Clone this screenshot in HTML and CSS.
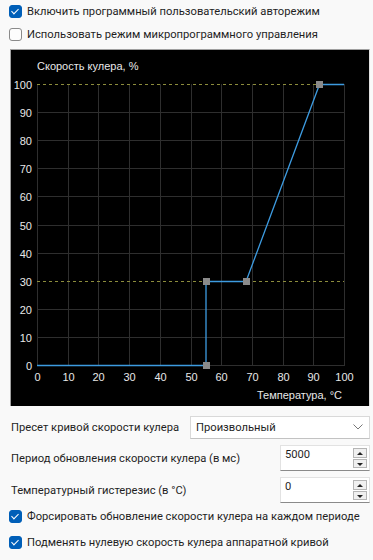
FILE: index.html
```html
<!DOCTYPE html>
<html lang="ru">
  <head>
    <meta charset="UTF-8" />
    <title>Кулер</title>
    <link rel="stylesheet" href="styles.css">
  </head>
  <body>
    <label class="check on"><span class="box"></span>Включить программный пользовательский авторежим</label>
    <label class="check tight"><span class="box"></span>Использовать режим микропрограммного управления</label>

    <div class="chart">
      <svg width="358" height="356" viewBox="0 0 358 356">
        <rect x="0" y="0" width="358" height="356" fill="#000" />
        <g id="grid" stroke="#2e2e2e" stroke-width="1"></g>
        <line x1="26" y1="34.5" x2="333" y2="34.5" stroke="#8c8c3c" stroke-dasharray="3 3" />
        <line x1="26" y1="231.5" x2="333" y2="231.5" stroke="#8c8c3c" stroke-dasharray="3 3" />
        <polyline points="26,315.5 195,315.5 195,231.5 235,231.5 308.5,34.5 333,34.5" fill="none" stroke="#3d9be0" stroke-width="1.3" />
        <g fill="#8a8a8a">
          <rect x="192" y="312" width="7" height="7" />
          <rect x="192" y="228" width="7" height="7" />
          <rect x="232" y="228" width="7" height="7" />
          <rect x="305" y="31" width="7" height="7" />
        </g>
        <g id="labels" fill="#e8e8e8" font-family="Liberation Sans, Arial, sans-serif" font-size="11"></g>
        <text x="26" y="20" fill="#e8e8e8" font-family="Liberation Sans, Arial, sans-serif" font-size="11">Скорость кулера, %</text>
        <text x="331" y="349" text-anchor="end" fill="#e8e8e8" font-family="Liberation Sans, Arial, sans-serif" font-size="11">Температура, °C</text>
      </svg>
    </div>

    <div class="row">
      <span class="label">Пресет кривой скорости кулера</span>
      <div class="select">
        <span>Произвольный</span>
        <svg width="10" height="6" viewBox="0 0 10 6"><path d="M0.5 0.5 L5 5 L9.5 0.5" fill="none" stroke="#777" /></svg>
      </div>
    </div>
    <div class="row spin-row">
      <span class="label">Период обновления скорости кулера (в мс)</span>
      <div class="spin">
        <span class="val">5000</span>
        <span class="arrows"><i class="up"></i><i class="down"></i></span>
      </div>
    </div>
    <div class="row spin-row">
      <span class="label">Температурный гистерезис (в °С)</span>
      <div class="spin">
        <span class="val">0</span>
        <span class="arrows"><i class="up"></i><i class="down"></i></span>
      </div>
    </div>

    <label class="check on"><span class="box"></span>Форсировать обновление скорости кулера на каждом периоде</label>
    <label class="check on"><span class="box"></span>Подменять нулевую скорость кулера аппаратной кривой</label>

    <script>
      var grid = document.getElementById("grid");
      var labels = document.getElementById("labels");
      var ns = "http://www.w3.org/2000/svg";
      function add(parent, tag, attrs, text) {
        var el = document.createElementNS(ns, tag);
        for (var k in attrs) el.setAttribute(k, attrs[k]);
        if (text !== undefined) el.textContent = text;
        parent.appendChild(el);
      }
      for (var i = 0; i <= 10; i++) {
        var x = Math.round(26 + i * 30.7) + 0.5;
        var y = Math.round(315 - i * 28.1) + 0.5;
        add(grid, "line", { x1: x, y1: 34, x2: x, y2: 316 });
        if (i !== 10 && i !== 3) add(grid, "line", { x1: 26, y1: y, x2: 333, y2: y });
        add(labels, "text", { x: 21, y: y + 4, "text-anchor": "end" }, i * 10);
        add(labels, "text", { x: x, y: 331, "text-anchor": "middle" }, i * 10);
      }
    </script>
  </body>
</html>
```

FILE: styles.css
```css
body {
  margin: 0;
  padding: 0 0 0 9px;
  background-color: #f9f9f9;
  font-family: Roboto, "Liberation Sans", sans-serif;
  font-size: 11.2px;
  color: #1f1f1f;
}

.check {
  display: flex;
  align-items: center;
  height: 23px;
  white-space: nowrap;
}
.check .box {
  flex: none;
  width: 11px;
  height: 11px;
  margin-right: 5px;
  border: 1px solid #8a8a8a;
  border-radius: 3px;
  background-color: #fdfdfd;
  position: relative;
}
.check.on .box {
  border-color: #005fb8;
  background-color: #005fb8;
}
.check.on .box::after {
  content: "";
  position: absolute;
  left: 3px;
  top: 1px;
  width: 3px;
  height: 6px;
  border: solid #fff;
  border-width: 0 1px 1px 0;
  transform: rotate(45deg);
}

.chart {
  margin: 3px 0 0 1px;
  width: 358px;
  height: 356px;
  border-top: 1px solid #a0a0a0;
  border-left: 1px solid #a0a0a0;
  border-right: 1px solid #e0e0e0;
  line-height: 0;
}

.row {
  display: flex;
  align-items: center;
  justify-content: space-between;
  margin-top: 9px;
  height: 24px;
  white-space: nowrap;
}
.label {
  margin-left: 2px;
}
.select {
  display: flex;
  align-items: center;
  justify-content: space-between;
  box-sizing: border-box;
  width: 180px;
  height: 23px;
  margin-right: 3px;
  padding: 0 6px 0 5px;
  background-color: #fff;
  border: 1px solid #d9d9d9;
  border-bottom-color: #c2c2c2;
}

.spin-row {
  height: 26px;
  margin-top: 6px;
}
.spin {
  display: flex;
  box-sizing: border-box;
  width: 90px;
  height: 26px;
  margin-right: 3px;
  padding: 2px 2px 2px 4px;
  background-color: #fff;
  border: 1px solid #e2e2e2;
  border-bottom: 1px solid #8a8a8a;
}
.spin .val {
  flex: 1;
  line-height: 14px;
}
.arrows {
  display: flex;
  flex-direction: column;
  width: 14px;
}
.arrows i {
  flex: 1;
  border: 1px solid #b5b5b5;
  background-color: #f0f0f0;
  position: relative;
}
.arrows i + i {
  margin-top: 1px;
}
.arrows i::after {
  content: "";
  position: absolute;
  left: 3px;
  top: 3px;
  border-left: 3px solid transparent;
  border-right: 3px solid transparent;
}
.arrows .up::after {
  border-bottom: 3px solid #222;
}
.arrows .down::after {
  border-top: 3px solid #222;
}

.spin-row + .check {
  margin-top: 2px;
}
.check + .check {
  margin-top: 3px;
}
.check + .check.tight {
  margin-top: 0;
}
```
